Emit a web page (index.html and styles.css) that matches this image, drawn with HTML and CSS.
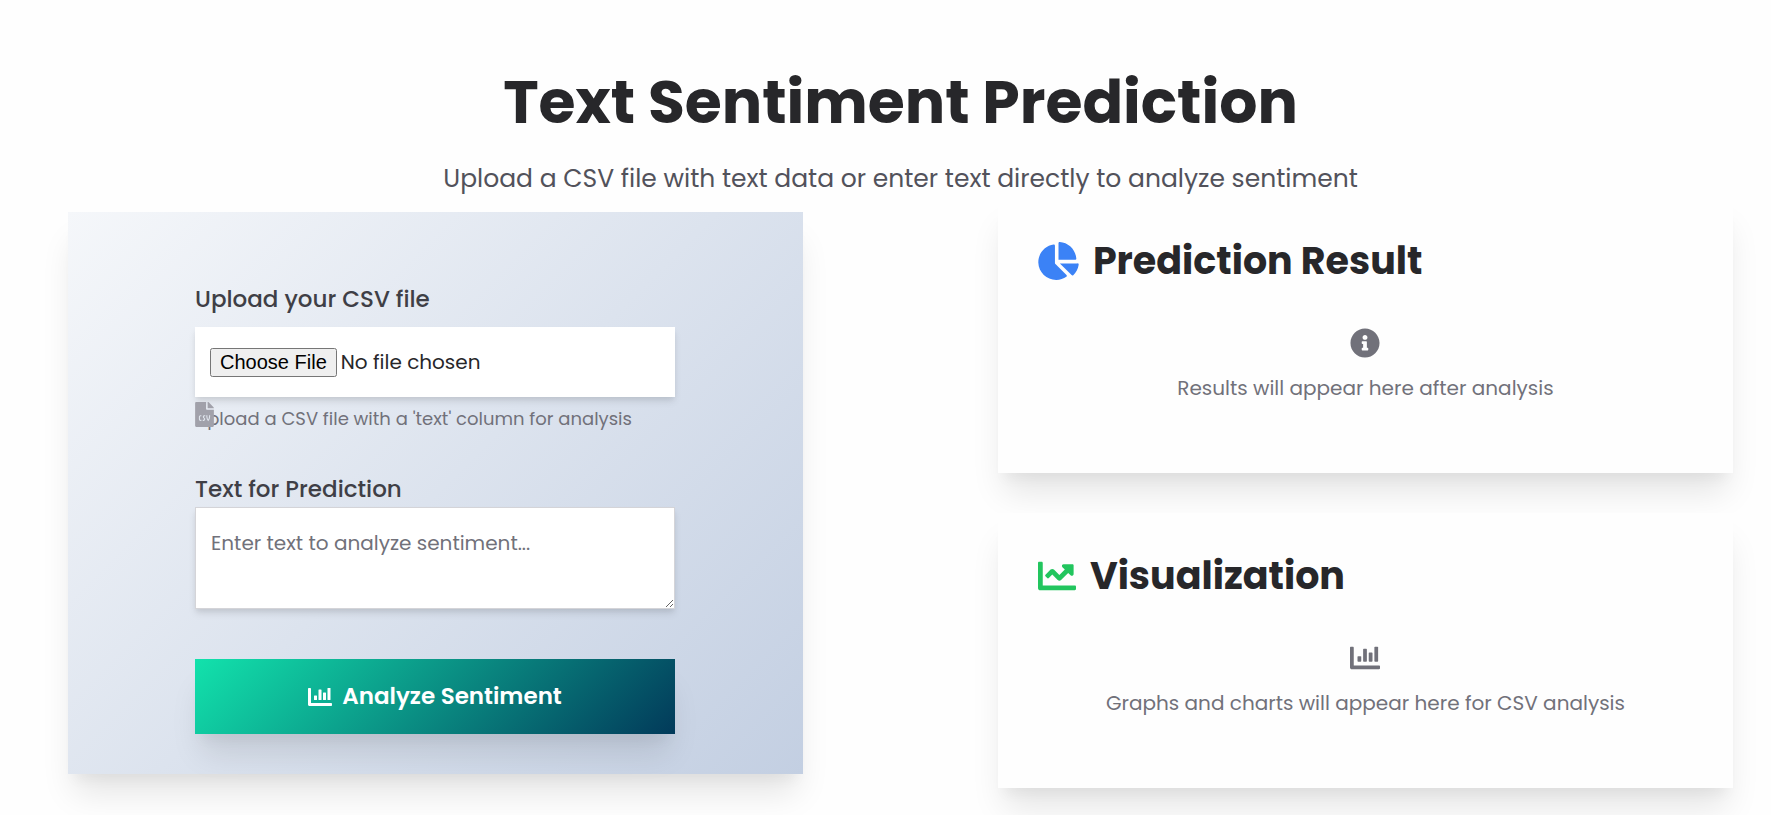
FILE: index.html
```html
<!DOCTYPE html>
<html lang="en">
<head>
<meta charset="utf-8">
<meta name="viewport" content="width=device-width, initial-scale=1">
<title>Text Sentiment Prediction</title>
<link rel="stylesheet" href="styles.css">
</head>
<body>
<svg class="sprite" aria-hidden="true">
  <symbol id="chart-bar" viewBox="0 0 512 512">
    <rect x="128" y="224" width="64" height="96" rx="12"/><rect x="224" y="96" width="64" height="224" rx="12"/><rect x="320" y="160" width="64" height="160" rx="12"/><rect x="416" y="64" width="64" height="256" rx="12"/>
    <path d="M496 384H64V80c0-8.840-7.160-16-16-16H16C7.160 64 0 71.160 0 80v336c0 17.670 14.330 32 32 32h464c8.840 0 16-7.160 16-16v-32c0-8.840-7.160-16-16-16z"/></symbol>
</svg>
<main class="page">
  <header class="intro">
    <h1 class="title">Text Sentiment Prediction</h1>
    <p class="subtitle">Upload a CSV file with text data or enter text directly to analyze sentiment</p>
  </header>
  <div class="columns">
    <section class="form-card">
      <form class="form">
        <div class="field">
          <label class="label" for="csv">Upload your CSV file</label>
          <input class="file" id="csv" type="file" accept=".csv">
          <div class="hint">
            <svg class="hint-icon" viewBox="0 0 384 512" aria-hidden="true"><path fill="currentColor" d="M224 136V0H24C10.700 0 0 10.700 0 24v464c0 13.300 10.700 24 24 24h336c13.300 0 24-10.700 24-24V160H248c-13.200 0-24-10.800-24-24zM384 121.900v6.100H256V0h6.100c6.400 0 12.500 2.500 17 7l97.900 98c4.500 4.500 7 10.600 7 16.900z"/><path class="csv-mark" d="M128 280h-16q-24 0-24 24v48q0 24 24 24h16M208 280h-16c-30 0-30 38-8 50 20 12 14 46-12 46h-16M240 272v30q4 50 28 76q24-26 28-76v-30"/></svg>
            <p class="hint-text">Upload a CSV file with a 'text' column for analysis</p>
          </div>
        </div>
        <div class="field">
          <label class="label" for="text">Text for Prediction</label>
          <textarea class="text" id="text" placeholder="Enter text to analyze sentiment..."></textarea>
        </div>
        <button class="submit" type="submit"><svg class="icon-button" fill="currentColor" aria-hidden="true"><use href="#chart-bar"/></svg>Analyze Sentiment</button>
      </form>
    </section>
    <div class="results">
      <section class="card">
        <h2 class="card-title"><svg class="icon-pie" viewBox="0 0 544 512" aria-hidden="true"><path fill="currentColor" d="M527.79 288H290.5l158.03 158.03c6.04 6.04 15.98 6.53 22.19.68 38.7-36.46 65.32-85.61 73.13-140.86 1.34-9.46-6.51-17.85-16.06-17.85zm-15.83-64.8C503.72 103.74 408.26 8.28 288.8.04 279.68-.59 272 7.1 272 16.24V240h223.77c9.14 0 16.82-7.68 16.19-16.8zM224 288V50.710c0-9.550-8.390-17.400-17.840-16.060C86.990 51.490-4.100 155.600.14 280.370 4.500 408.510 114.830 513.590 243.030 511.980c50.400-.63 96.970-16.870 135.260-44.030 7.900-5.600 8.420-17.230 1.570-24.080L224 288z"/></svg>Prediction Result</h2>
        <div class="empty">
          <svg class="icon-empty" viewBox="0 0 512 512" aria-hidden="true"><path fill="currentColor" d="M256 8C119.043 8 8 119.083 8 256c0 136.997 111.043 248 248 248s248-111.003 248-248C504 119.083 392.957 8 256 8zm0 110c23.196 0 42 18.804 42 42s-18.804 42-42 42-42-18.804-42-42 18.804-42 42-42zm56 254c0 6.627-5.373 12-12 12h-88c-6.627 0-12-5.373-12-12v-24c0-6.627 5.373-12 12-12h12v-64h-12c-6.627 0-12-5.373-12-12v-24c0-6.627 5.373-12 12-12h64c6.627 0 12 5.373 12 12v100h12c6.627 0 12 5.373 12 12v24z"/></svg>
          <p class="empty-text">Results will appear here after analysis</p>
        </div>
      </section>
      <section class="card">
        <h2 class="card-title"><svg class="icon-line" viewBox="0 0 512 512" aria-hidden="true"><path fill="currentColor" d="M496 384H64V80c0-8.840-7.160-16-16-16H16C7.160 64 0 71.160 0 80v336c0 17.670 14.330 32 32 32h464c8.840 0 16-7.160 16-16v-32c0-8.840-7.160-16-16-16zM464 96H345.940c-21.380 0-32.090 25.850-16.970 40.970l32.400 32.400L288 242.750l-73.370-73.370c-12.500-12.500-32.760-12.500-45.250 0l-68.690 68.690c-6.250 6.250-6.250 16.380 0 22.630l22.620 22.620c6.250 6.250 16.380 6.250 22.630 0L192 237.250l73.370 73.370c12.500 12.500 32.760 12.500 45.250 0l96-96 32.400 32.400c15.120 15.120 40.970 4.410 40.970-16.970V112c.01-8.840-7.150-16-15.990-16z"/></svg>Visualization</h2>
        <div class="empty">
          <svg class="icon-empty" fill="currentColor" aria-hidden="true"><use href="#chart-bar"/></svg>
          <p class="empty-text">Graphs and charts will appear here for CSV analysis</p>
        </div>
      </section>
    </div>
  </div>
</main>
</body>
</html>
```

FILE: styles.css
```css
* {
  box-sizing: border-box;
}

body {
  margin: 0;
  background: #fefefe;
  color: #27272a;
  font-family: Poppins, Inter, sans-serif;
  font-size: 20px;
  line-height: 30px;
}

h1, h2, p {
  margin: 0;
}

.sprite {
  position: absolute;
  width: 0;
  height: 0;
}

.page {
  padding: 65px 38px 27px 68px;
}

.intro {
  text-align: center;
}

.title {
  font-size: 60px;
  line-height: 75px;
  font-weight: 700;
}

.subtitle {
  margin-top: 20px;
  font-size: 25px;
  line-height: 38px;
  color: #52525b;
}

.columns {
  display: grid;
  grid-template-columns: 1fr 1fr;
  column-gap: 11.7%;
  align-items: center;
}

.form-card,
.card,
.submit {
  box-shadow: 0 25px 31px -6px rgba(0, 0, 0, 0.1), 0 12px 12px -6px rgba(0, 0, 0, 0.04);
}

.form-card {
  padding: 70px 41px 40px 40px;
  background: linear-gradient(135deg, #f5f7fa 0%, #c3cfe2 100%);
}

.form {
  display: flex;
  flex-direction: column;
  gap: 40px;
  max-width: 480px;
  margin: 0 auto;
}

.field {
  display: flex;
  flex-direction: column;
}

.label {
  font-size: 23px;
  line-height: 35px;
  font-weight: 500;
  color: #3f3f46;
}

.file,
.text {
  width: 100%;
  padding: 20px 15px;
  background: #fff;
  color: #27272a;
  font: inherit;
  box-shadow: 0 5px 8px -1px rgba(0, 0, 0, 0.1), 0 3px 5px -1px rgba(0, 0, 0, 0.06);
}

.file {
  margin-top: 10px;
}

.file::file-selector-button {
  padding: 1px 8px;
  font: 20px "Liberation Sans", sans-serif;
}

.hint {
  position: relative;
  padding-top: 8px;
}

.hint-icon {
  position: absolute;
  top: 5px;
  left: 0;
  width: 19px;
  height: 25px;
  color: #a1a1aa;
}

.csv-mark {
  fill: none;
  stroke: #e1e6ee;
  stroke-width: 22;
}

.hint-text {
  font-size: 18px;
  line-height: 27px;
  color: #71717a;
}

.text {
  height: 102px;
  border: 1px solid #d4d4d8;
  border-radius: 0;
  resize: both;
}

.text::placeholder {
  color: #71717a;
}

.submit {
  display: flex;
  align-items: center;
  justify-content: center;
  gap: 10px;
  margin-top: 10px;
  padding: 20px;
  border: 0;
  background: linear-gradient(135deg, #12e2ac 0%, #023a5a 100%);
  color: #fff;
  font-family: inherit;
  font-size: 23px;
  line-height: 35px;
  font-weight: 600;
}

.icon-button {
  width: 24px;
  height: 24px;
}

.results {
  display: flex;
  flex-direction: column;
  gap: 40px;
}

.card {
  padding: 40px;
  background: #fefefe;
}

.card-title {
  display: flex;
  align-items: center;
  gap: 14px;
  font-size: 38px;
  line-height: 45px;
  font-weight: 700;
}

.icon-pie {
  width: 41px;
  height: 38px;
  color: #3b82f6;
}

.icon-line {
  width: 38px;
  height: 38px;
  color: #22c55e;
}

.empty {
  display: flex;
  flex-direction: column;
  align-items: center;
  gap: 15px;
  padding: 45px 0 30px;
  color: #71717a;
}

.icon-empty {
  width: 30px;
  height: 30px;
}

.empty-text {
  font-size: 20px;
  line-height: 30px;
}
```
